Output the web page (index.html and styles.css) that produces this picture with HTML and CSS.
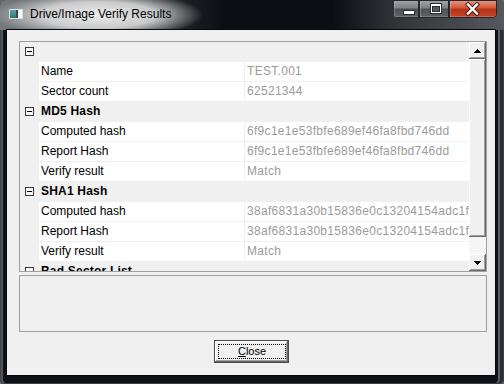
FILE: index.html
```html
<!DOCTYPE html>
<html lang="en">
<head>
    <meta charset="UTF-8">
    <meta name="viewport" content="width=device-width, initial-scale=1.0">
    <title>Drive/Image Verify Results</title>
    <link rel="stylesheet" href="styles.css">
</head>
<body>
    <div class="window">
        <div class="titlebar">
            <svg class="app-icon" width="14" height="10" viewBox="0 0 14 10">
                <defs>
                    <linearGradient id="ig" x1="0" y1="0" x2="0" y2="1">
                        <stop offset="0" stop-color="#5aa0c8"/>
                        <stop offset="1" stop-color="#2f7a5a"/>
                    </linearGradient>
                </defs>
                <rect x="0" y="0" width="14" height="10" fill="#d8dde2"/>
                <rect x="1" y="1" width="6" height="8" fill="url(#ig)"/>
                <rect x="7" y="1" width="2" height="8" fill="#3c4650"/>
                <rect x="9" y="1" width="4" height="8" fill="#f4f6f8"/>
            </svg>
            <span class="title">Drive/Image Verify Results</span>
            <div class="caption-buttons">
                <div class="cap-btn min">
                    <svg width="26" height="18" viewBox="0 0 26 18">
                        <rect x="10.5" y="10.5" width="11" height="4" fill="#fff" stroke="#2a2c30"/>
                    </svg>
                </div>
                <div class="cap-btn max">
                    <svg width="30" height="18" viewBox="0 0 30 18">
                        <rect x="11.5" y="3.5" width="11" height="10" fill="#fff" stroke="#2a2c30"/>
                        <rect x="13.5" y="6.5" width="7" height="5" fill="#55585c" stroke="#2a2c30"/>
                    </svg>
                </div>
                <div class="cap-btn close">
                    <svg width="48" height="18" viewBox="0 0 48 18">
                        <path d="M19 4.5 L28 13.5 M28 4.5 L19 13.5" stroke="#4a1a10" stroke-width="4.4" stroke-linecap="square"/>
                        <path d="M19 4.5 L28 13.5 M28 4.5 L19 13.5" stroke="#fff" stroke-width="2.4" stroke-linecap="square"/>
                    </svg>
                </div>
            </div>
        </div>

        <div class="client">
            <div class="propgrid">
                <div class="rows">
                    <div class="row category"><span class="margin"><i class="toggle"></i></span><span class="cat-name"></span></div>
                    <div class="row"><span class="margin"></span><span class="label">Name</span><span class="value">TEST.001</span></div>
                    <div class="row"><span class="margin"></span><span class="label">Sector count</span><span class="value">62521344</span></div>
                    <div class="row category"><span class="margin"><i class="toggle"></i></span><span class="cat-name">MD5 Hash</span></div>
                    <div class="row"><span class="margin"></span><span class="label">Computed hash</span><span class="value">6f9c1e1e53fbfe689ef46fa8fbd746dd</span></div>
                    <div class="row"><span class="margin"></span><span class="label">Report Hash</span><span class="value">6f9c1e1e53fbfe689ef46fa8fbd746dd</span></div>
                    <div class="row"><span class="margin"></span><span class="label">Verify result</span><span class="value">Match</span></div>
                    <div class="row category"><span class="margin"><i class="toggle"></i></span><span class="cat-name">SHA1 Hash</span></div>
                    <div class="row"><span class="margin"></span><span class="label">Computed hash</span><span class="value">38af6831a30b15836e0c13204154adc1f</span></div>
                    <div class="row"><span class="margin"></span><span class="label">Report Hash</span><span class="value">38af6831a30b15836e0c13204154adc1f</span></div>
                    <div class="row"><span class="margin"></span><span class="label">Verify result</span><span class="value">Match</span></div>
                    <div class="row category"><span class="margin"><i class="toggle"></i></span><span class="cat-name">Bad Sector List</span></div>
                </div>
                <div class="vscroll">
                    <div class="sb-btn">
                        <svg width="7" height="4" viewBox="0 0 7 4" shape-rendering="crispEdges"><path d="M3 0h1v1h-1z M2 1h3v1h-3z M1 2h5v1h-5z M0 3h7v1h-7z" fill="#000"/></svg>
                    </div>
                    <div class="sb-thumb"></div>
                    <div class="sb-track"></div>
                    <div class="sb-btn">
                        <svg width="7" height="4" viewBox="0 0 7 4" shape-rendering="crispEdges"><path d="M0 0h7v1h-7z M1 1h5v1h-5z M2 2h3v1h-3z M3 3h1v1h-1z" fill="#000"/></svg>
                    </div>
                </div>
            </div>
            <div class="description"></div>
            <div class="button-row">
                <button class="btn"><span class="focus"><u>C</u>lose</span></button>
            </div>
        </div>
    </div>
</body>
</html>
```

FILE: styles.css
```css
* {
    box-sizing: border-box;
}
html, body {
    margin: 0;
    padding: 0;
}
body {
    width: 504px;
    height: 384px;
    overflow: hidden;
    background: #6a6a6a;
    font-family: "Liberation Sans", Arial, sans-serif;
}

.window {
    width: 504px;
    height: 384px;
    display: flex;
    flex-direction: column;
    background: #0e1217;
    border-radius: 6px 6px 5px 5px;
    box-shadow: inset 0 0 0 1px #3e4247, inset 3px 0 0 #52565b, inset -4px 0 0 #2a2e33, inset -6px 0 0 #5b5f64;
}

/* title bar */
.titlebar {
    height: 30px;
    display: flex;
    align-items: flex-start;
    border-radius: 6px 6px 0 0;
    background:
        radial-gradient(ellipse 105px 24px at 98px 15px, rgba(236,236,236,1) 0%, rgba(214,214,214,0.92) 55%, rgba(150,150,150,0) 100%),
        linear-gradient(to right, #75797d 0, #30343a 28%, #0b0f14 45%, #0b0f14 66%, #2f3338 78%, #55595e 100%);
}
.app-icon {
    margin: 9px 0 0 9px;
    flex-shrink: 0;
}
.title {
    margin: 7px 0 0 7px;
    font-size: 12px;
    line-height: 15px;
    color: #000;
    white-space: nowrap;
}
.caption-buttons {
    margin-left: auto;
    margin-right: 7px;
    display: flex;
}
.cap-btn {
    height: 18px;
    box-shadow: inset 0 0 0 1px #24272b, inset 0 -2px 0 rgba(255,255,255,0.18), inset 1px 0 0 1px rgba(255,255,255,0.25);
}
.cap-btn svg {
    display: block;
}
.cap-btn.min {
    width: 26px;
    border-radius: 0 0 0 4px;
    background: linear-gradient(#a3a6aa 0%, #7b7e82 45%, #4d5054 50%, #606367 100%);
}
.cap-btn.max {
    width: 30px;
    background: linear-gradient(#a3a6aa 0%, #7b7e82 45%, #4d5054 50%, #606367 100%);
}
.cap-btn.close {
    width: 48px;
    border-radius: 0 0 4px 0;
    background: linear-gradient(#e79a86 0%, #d0573b 45%, #b53218 50%, #c8482c 100%);
}

/* client area */
.client {
    flex: 1;
    margin: 0 9px 9px 7px;
    background: #f0f0f0;
    box-shadow: 0 0 0 1px #05070a;
    padding: 11px 8px 0 12px;
    display: flex;
    flex-direction: column;
}

.propgrid {
    height: 231px;
    border: 1px solid #a0a0a0;
    background: #f0f0f0;
    display: flex;
    overflow: hidden;
}
.rows {
    width: 449px;
    overflow: hidden;
}
.row {
    display: grid;
    grid-template-columns: 18px 205px 225px;
    column-gap: 1px;
    height: 20px;
    background: #f0f0f0;
    font-size: 12px;
    line-height: 19px;
}
.row .label,
.row .value {
    height: 19px;
    background: #fff;
    padding-left: 2px;
    white-space: nowrap;
    overflow: hidden;
}
.row .label {
    color: #000;
}
.row .value {
    color: #9b9b9b;
    letter-spacing: 0.3px;
}
.category .cat-name {
    grid-column: 2 / 4;
    padding-left: 2px;
    font-weight: bold;
    letter-spacing: 0.2px;
    white-space: nowrap;
}
.toggle {
    display: block;
    position: relative;
    width: 9px;
    height: 9px;
    margin: 5px 0 0 5px;
    border: 1px solid #3a3a3a;
    background: #f7f7f7;
}
.toggle::after {
    content: "";
    position: absolute;
    left: 1px;
    top: 3px;
    width: 5px;
    height: 1px;
    background: #000;
}

/* scrollbar */
.vscroll {
    width: 17px;
    display: flex;
    flex-direction: column;
}
.sb-btn,
.sb-thumb {
    background: #f0f0f0;
    box-shadow: inset -1px -1px 0 #696969, inset 1px 1px 0 #fff, inset -2px -2px 0 #a0a0a0;
}
.sb-btn {
    height: 17px;
    display: flex;
    align-items: center;
    justify-content: center;
}
.sb-btn svg {
    display: block;
}
.sb-thumb {
    height: 178px;
}
.sb-track {
    flex: 1;
    background: #f5f5f5;
}

.description {
    height: 57px;
    margin-top: 3px;
    border: 1px solid #a0a0a0;
    background: #f0f0f0;
}

.button-row {
    margin-top: 8px;
    padding-right: 3px;
    display: flex;
    justify-content: center;
}
.btn {
    width: 75px;
    height: 23px;
    padding: 3px 2px 3px 3px;
    margin: 0;
    display: flex;
    border: 1px solid #4a4a4a;
    background: #f0f0f0;
    box-shadow: inset -1px -1px 0 #696969, inset 1px 1px 0 #fff, inset -2px -2px 0 #a0a0a0;
    font-family: "Liberation Sans", Arial, sans-serif;
    font-size: 11px;
    color: #000;
}
.btn .focus {
    flex: 1;
    border: 1px dotted #000;
    display: flex;
    align-items: center;
    justify-content: center;
    line-height: 13px;
}
```
